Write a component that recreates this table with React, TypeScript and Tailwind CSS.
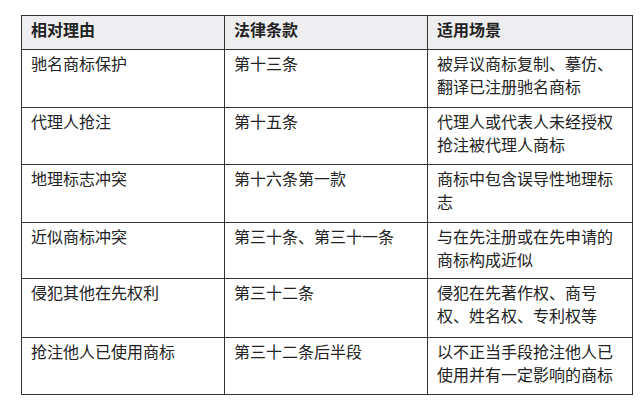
const rows: [string, string, string][] = [
  ["驰名商标保护", "第十三条", "被异议商标复制、摹仿、翻译已注册驰名商标"],
  ["代理人抢注", "第十五条", "代理人或代表人未经授权抢注被代理人商标"],
  ["地理标志冲突", "第十六条第一款", "商标中包含误导性地理标志"],
  ["近似商标冲突", "第三十条、第三十一条", "与在先注册或在先申请的商标构成近似"],
  ["侵犯其他在先权利", "第三十二条", "侵犯在先著作权、商号权、姓名权、专利权等"],
  ["抢注他人已使用商标", "第三十二条后半段", "以不正当手段抢注他人已使用并有一定影响的商标"],
];

const heights = ["h-[58px]", "h-[57px]", "h-[58px]", "h-[56px]", "h-[59px]", "h-[57px]"];

export default function App() {
  return (
    <div
      className="w-[640px] h-[407px] bg-white pt-[15px] pl-[21px] text-[#222]"
      style={{ fontFamily: '"Noto Sans CJK SC", "Noto Sans", sans-serif' }}
    >
      <table className="border-collapse table-fixed w-[611px] text-[16px] leading-[23px]">
        <colgroup>
          <col className="w-[203px]" />
          <col className="w-[203px]" />
          <col className="w-[205px]" />
        </colgroup>
        <thead>
          <tr className="h-[34px] bg-[#eeeef0]">
            <th className="border border-[#333] align-top text-left font-bold pt-[2px] px-[9px]">相对理由</th>
            <th className="border border-[#333] align-top text-left font-bold pt-[2px] px-[9px]">法律条款</th>
            <th className="border border-[#333] align-top text-left font-bold pt-[2px] px-[9px]">适用场景</th>
          </tr>
        </thead>
        <tbody>
          {rows.map((r, i) => (
            <tr key={i} className={heights[i]}>
              <td className="border border-[#333] align-top pt-[2px] px-[9px]">{r[0]}</td>
              <td className="border border-[#333] align-top pt-[2px] px-[9px]">{r[1]}</td>
              <td className="border border-[#333] align-top pt-[2px] px-[9px]">{r[2]}</td>
            </tr>
          ))}
        </tbody>
      </table>
    </div>
  );
}
